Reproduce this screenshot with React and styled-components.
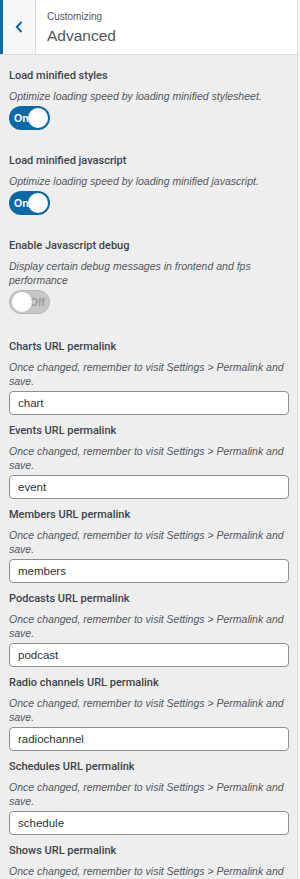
import styled, { createGlobalStyle } from 'styled-components';

const GlobalStyle = createGlobalStyle`
  html, body {
    margin: 0;
    padding: 0;
    background: #f6f6f6;
  }
  body {
    font-family: "Liberation Sans", Arial, sans-serif;
  }
`;

const toggles = [
  {
    title: 'Load minified styles',
    desc: 'Optimize loading speed by loading minified stylesheet.',
    on: true,
  },
  {
    title: 'Load minified javascript',
    desc: 'Optimize loading speed by loading minified javascript.',
    on: true,
  },
  {
    title: 'Enable Javascript debug',
    desc: 'Display certain debug messages in frontend and fps performance',
    on: false,
  },
];

const permalinks = [
  { title: 'Charts URL permalink', value: 'chart' },
  { title: 'Events URL permalink', value: 'event' },
  { title: 'Members URL permalink', value: 'members' },
  { title: 'Podcasts URL permalink', value: 'podcast' },
  { title: 'Radio channels URL permalink', value: 'radiochannel' },
  { title: 'Schedules URL permalink', value: 'schedule' },
  { title: 'Shows URL permalink', value: 'show' },
];

const PERMALINK_HINT = 'Once changed, remember to visit Settings > Permalink and save.';

const App = () => {
  return (
    <>
      <GlobalStyle />
      <Panel>
        <Header>
          <BackButton aria-label="Back">
            <svg width="8" height="12" viewBox="0 0 8 12">
              <path d="M6.5 1 L1.8 6 L6.5 11" fill="none" stroke="#0a6aa8" strokeWidth="2" />
            </svg>
          </BackButton>
          <HeaderTitles>
            <Crumb>Customizing</Crumb>
            <Title>Advanced</Title>
          </HeaderTitles>
        </Header>

        <Controls>
          <ToggleGroup>
            {toggles.map((t) => (
              <ToggleControl key={t.title}>
                <Label>{t.title}</Label>
                <Description>{t.desc}</Description>
                <Switch $on={t.on}>
                  <SwitchText $on={t.on}>{t.on ? 'On' : 'Off'}</SwitchText>
                  <Knob $on={t.on} />
                </Switch>
              </ToggleControl>
            ))}
          </ToggleGroup>

          {permalinks.map((p) => (
            <TextControl key={p.title}>
              <Label>{p.title}</Label>
              <Description>{PERMALINK_HINT}</Description>
              <TextInput defaultValue={p.value} />
            </TextControl>
          ))}
        </Controls>
      </Panel>
    </>
  );
};

const Panel = styled.div`
  width: 297px;
  height: 879px;
  overflow: hidden;
  background: #eeeeee;
  border-right: 1px solid #dcdcde;
`;

const Header = styled.div`
  display: flex;
  height: 54px;
  background: #ffffff;
  border-bottom: 1px solid #dcdcde;
`;

const BackButton = styled.div`
  width: 32px;
  display: flex;
  align-items: center;
  justify-content: center;
  background: #f6f7f7;
  border-left: 3px solid #0a6aa8;
  border-right: 1px solid #dcdcde;
`;

const HeaderTitles = styled.div`
  display: flex;
  flex-direction: column;
  padding: 10px 0 0 11px;
`;

const Crumb = styled.div`
  font-size: 10px;
  line-height: 13px;
  color: #50575e;
`;

const Title = styled.div`
  font-size: 15.5px;
  line-height: 20px;
  margin-top: 3px;
  color: #50575e;
  font-weight: 300;
`;

const Controls = styled.div`
  padding: 13px 9px 0 9px;
`;

const ToggleGroup = styled.div`
  display: flex;
  flex-direction: column;
  gap: 23px;
  margin-bottom: 25px;
`;

const ToggleControl = styled.div``;

const TextControl = styled.div`
  margin-bottom: 8px;
`;

const Label = styled.div`
  font-family: Roboto, "Liberation Sans", Arial, sans-serif;
  font-size: 11px;
  line-height: 16px;
  font-weight: 500;
  color: #3c434a;
  margin-bottom: 5px;
`;

const Description = styled.div`
  font-size: 10.5px;
  line-height: 14px;
  font-style: italic;
  color: #50575e;
  margin-bottom: 3px;
`;

const Switch = styled.div`
  position: relative;
  width: 41px;
  height: 24px;
  border-radius: 12px;
  background: ${({ $on }) => ($on ? '#0a6aa8' : '#c6c7c9')};
  border: ${({ $on }) => ($on ? 'none' : '1px solid #b4b6b9')};
  box-sizing: border-box;
  margin-top: 2px;
`;

const SwitchText = styled.span`
  position: absolute;
  top: 50%;
  transform: translateY(-50%);
  ${({ $on }) => ($on ? 'left: 5px;' : 'right: 4px;')}
  font-size: 10.5px;
  font-weight: 700;
  color: ${({ $on }) => ($on ? '#ffffff' : '#9a9da1')};
`;

const Knob = styled.span`
  position: absolute;
  top: 50%;
  transform: translateY(-50%);
  ${({ $on }) => ($on ? 'right: 2px;' : 'left: 2px;')}
  width: 20px;
  height: 20px;
  border-radius: 50%;
  background: #ffffff;
`;

const TextInput = styled.input`
  display: block;
  box-sizing: border-box;
  width: 280px;
  height: 24px;
  padding: 0 8px;
  border: 1px solid #8c8f94;
  border-radius: 4px;
  background: #ffffff;
  font-family: "Liberation Sans", Arial, sans-serif;
  font-size: 11.5px;
  color: #2c3338;
  outline: none;
`;

export default App;
